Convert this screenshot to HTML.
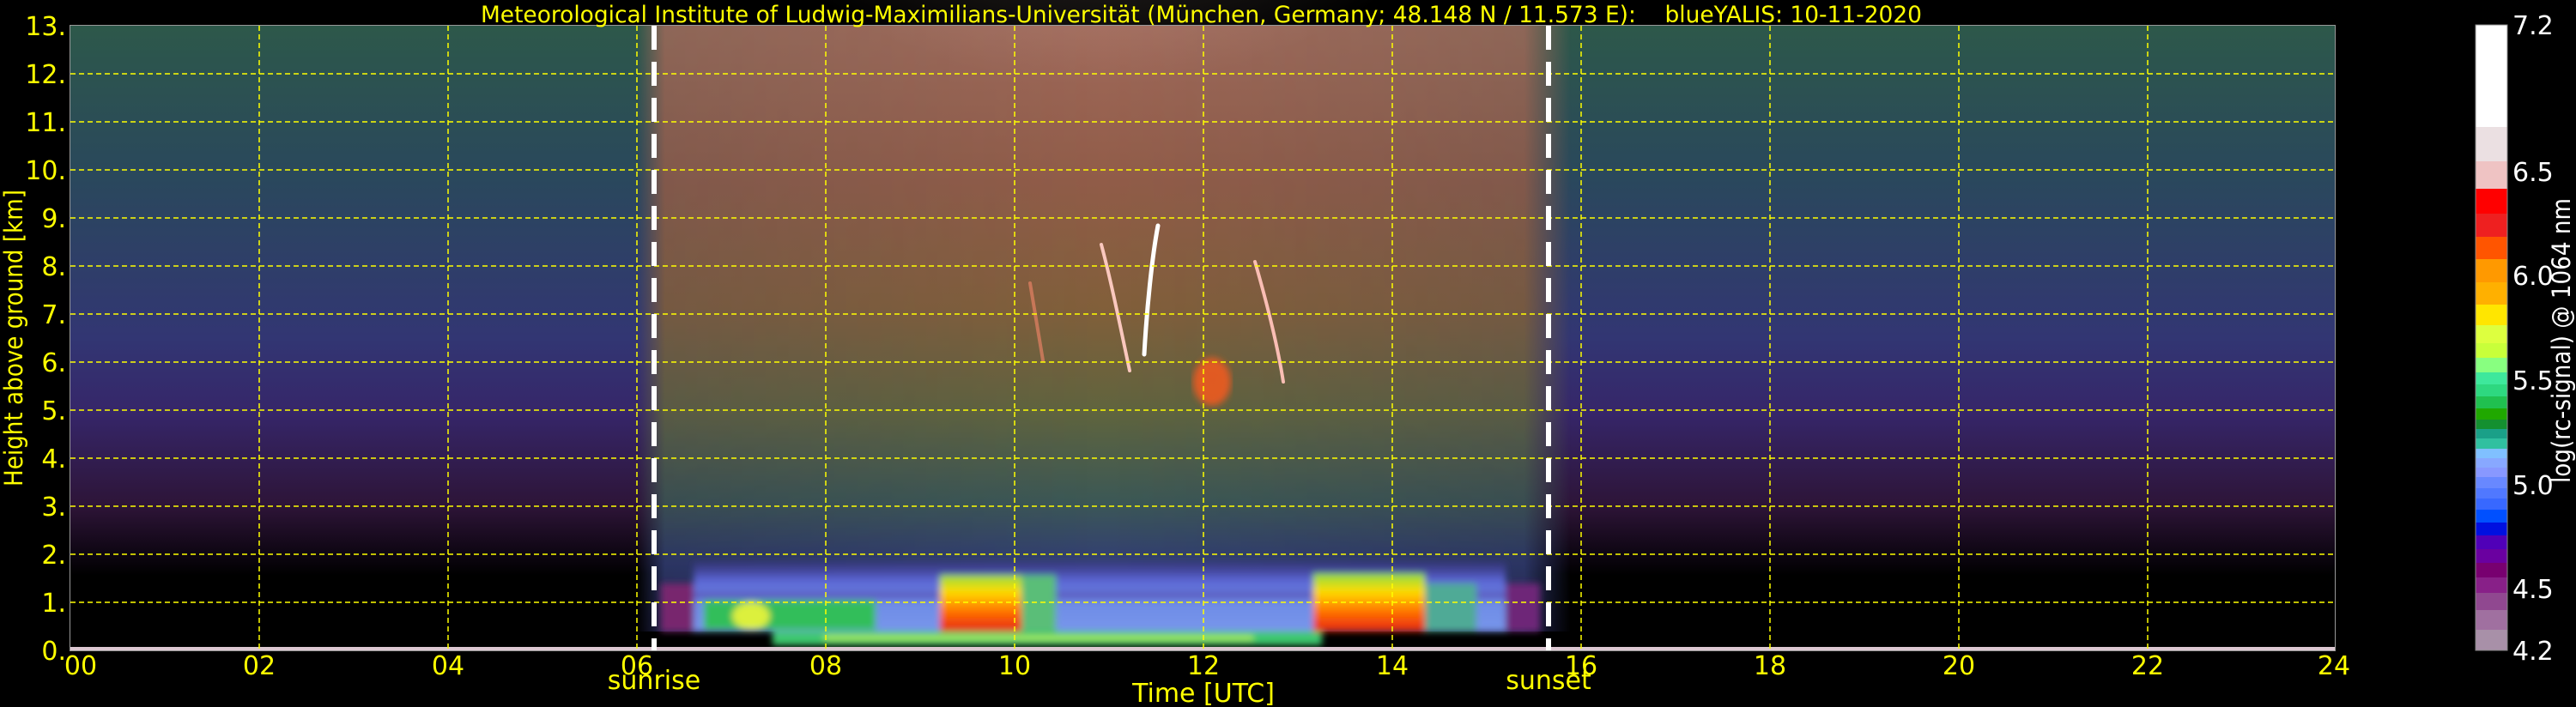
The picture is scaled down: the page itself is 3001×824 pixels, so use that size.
<!DOCTYPE html>
<html><head><meta charset="utf-8"><style>
html,body{margin:0;padding:0;background:#000;width:3001px;height:824px;overflow:hidden}
svg{display:block}
text{font-family:"DejaVu Sans","Liberation Sans",sans-serif}
</style></head><body>
<svg width="3001" height="824" viewBox="0 0 3001 824" xmlns="http://www.w3.org/2000/svg">
<defs>
<linearGradient id="night" x1="0" y1="30" x2="0" y2="758" gradientUnits="userSpaceOnUse">
<stop offset="0" stop-color="rgb(45,88,74)"/>
<stop offset="0.24" stop-color="rgb(42,72,92)"/>
<stop offset="0.5" stop-color="rgb(50,54,115)"/>
<stop offset="0.62" stop-color="rgb(54,38,105)"/>
<stop offset="0.77" stop-color="rgb(45,20,55)"/>
<stop offset="0.85" stop-color="rgb(12,5,16)"/>
<stop offset="0.88" stop-color="rgb(0,0,0)"/>
<stop offset="1" stop-color="rgb(0,0,0)"/>
</linearGradient>
<linearGradient id="day" x1="0" y1="30" x2="0" y2="758" gradientUnits="userSpaceOnUse">
<stop offset="0" stop-color="rgb(160,105,90)"/>
<stop offset="0.25" stop-color="rgb(145,92,72)"/>
<stop offset="0.45" stop-color="rgb(130,95,58)"/>
<stop offset="0.62" stop-color="rgb(95,100,62)"/>
<stop offset="0.76" stop-color="rgb(60,88,85)"/>
<stop offset="0.86" stop-color="rgb(50,62,115)"/>
<stop offset="1" stop-color="rgb(40,40,90)"/>
</linearGradient>
<linearGradient id="dayx" x1="742" y1="0" x2="1830" y2="0" gradientUnits="userSpaceOnUse">
<stop offset="0" stop-color="#fff" stop-opacity="0"/>
<stop offset="0.03" stop-color="#fff" stop-opacity="0.85"/>
<stop offset="0.5" stop-color="#fff" stop-opacity="1"/>
<stop offset="0.95" stop-color="#fff" stop-opacity="0.85"/>
<stop offset="1" stop-color="#fff" stop-opacity="0"/>
</linearGradient>
<mask id="dm"><rect x="742" y="30" width="1090" height="728" fill="url(#dayx)"/></mask>
<radialGradient id="whiteTop" cx="0.5" cy="0" r="0.6">
<stop offset="0" stop-color="rgb(230,200,190)" stop-opacity="0.4"/>
<stop offset="1" stop-color="rgb(230,200,190)" stop-opacity="0"/>
</radialGradient>
<linearGradient id="blband" x1="0" y1="655" x2="0" y2="736" gradientUnits="userSpaceOnUse">
<stop offset="0" stop-color="rgb(70,60,160)" stop-opacity="0.3"/>
<stop offset="0.25" stop-color="rgb(90,100,210)"/>
<stop offset="0.6" stop-color="rgb(110,140,230)"/>
<stop offset="1" stop-color="rgb(120,150,235)"/>
</linearGradient>
<linearGradient id="orb" x1="0" y1="665" x2="0" y2="735" gradientUnits="userSpaceOnUse">
<stop offset="0" stop-color="rgb(120,220,80)"/>
<stop offset="0.35" stop-color="rgb(255,220,0)"/>
<stop offset="0.7" stop-color="rgb(255,110,0)"/>
<stop offset="1" stop-color="rgb(230,40,20)"/>
</linearGradient>
<filter id="bl" x="-5%" y="-20%" width="110%" height="140%"><feGaussianBlur stdDeviation="4"/></filter>
</defs>
<rect width="3001" height="824" fill="#000"/>
<rect x="82" y="30" width="2638" height="728" fill="url(#night)"/>
<rect x="742" y="30" width="1090" height="728" fill="url(#day)" mask="url(#dm)"/>
<ellipse cx="1280" cy="30" rx="420" ry="350" fill="url(#whiteTop)"/>
<rect x="745" y="736" width="1090" height="18" fill="#000"/>
<g filter="url(#bl)">
<rect x="770" y="680" width="40" height="56" fill="rgb(120,40,110)"/>
<rect x="1754" y="680" width="40" height="56" fill="rgb(110,40,120)"/>
<rect x="808" y="655" width="946" height="81" fill="url(#blband)"/>
<rect x="808" y="690" width="946" height="8" fill="rgb(80,60,160)" opacity="0.5"/>
<rect x="820" y="700" width="200" height="34" fill="rgb(50,190,90)"/>
<ellipse cx="875" cy="718" rx="22" ry="16" fill="rgb(220,240,60)"/>
<rect x="1095" y="670" width="95" height="66" fill="url(#orb)"/>
<rect x="1190" y="670" width="40" height="66" fill="rgb(90,190,120)"/>
<rect x="1530" y="668" width="130" height="68" fill="url(#orb)"/>
<rect x="1660" y="680" width="60" height="56" fill="rgb(80,170,150)"/>
<rect x="900" y="736" width="640" height="16" fill="rgb(60,200,110)"/>
<rect x="960" y="741" width="500" height="5" fill="rgb(180,240,90)"/>
</g>
<rect x="82" y="754" width="2638" height="4" fill="rgb(220,200,210)"/>
<g fill="none" stroke-linecap="round">
<path d="M1349 263 C1342 300 1336 360 1333 413" stroke="#fff" stroke-width="5"/>
<path d="M1283 285 C1295 330 1305 380 1316 432" stroke="rgb(250,200,190)" stroke-width="4"/>
<path d="M1462 305 C1475 350 1488 400 1495 445" stroke="rgb(250,190,180)" stroke-width="4"/>
<path d="M1200 330 C1205 360 1210 390 1215 420" stroke="rgb(230,130,100)" stroke-width="4" opacity="0.7"/>
</g>
<ellipse cx="1412" cy="445" rx="22" ry="28" fill="rgb(255,90,30)" opacity="0.8" filter="url(#bl)"/>
<g stroke="#ffff00" stroke-width="1.5" stroke-dasharray="6,4">
<line x1="302" y1="30" x2="302" y2="758"/><line x1="522" y1="30" x2="522" y2="758"/>
<line x1="742" y1="30" x2="742" y2="758"/><line x1="962" y1="30" x2="962" y2="758"/>
<line x1="1182" y1="30" x2="1182" y2="758"/><line x1="1402" y1="30" x2="1402" y2="758"/>
<line x1="1622" y1="30" x2="1622" y2="758"/><line x1="1842" y1="30" x2="1842" y2="758"/>
<line x1="2062" y1="30" x2="2062" y2="758"/><line x1="2282" y1="30" x2="2282" y2="758"/>
<line x1="2502" y1="30" x2="2502" y2="758"/>
<line x1="82" y1="702" x2="2720" y2="702"/><line x1="82" y1="646" x2="2720" y2="646"/>
<line x1="82" y1="590" x2="2720" y2="590"/><line x1="82" y1="534" x2="2720" y2="534"/>
<line x1="82" y1="478" x2="2720" y2="478"/><line x1="82" y1="422" x2="2720" y2="422"/>
<line x1="82" y1="366" x2="2720" y2="366"/><line x1="82" y1="310" x2="2720" y2="310"/>
<line x1="82" y1="254" x2="2720" y2="254"/><line x1="82" y1="198" x2="2720" y2="198"/>
<line x1="82" y1="142" x2="2720" y2="142"/><line x1="82" y1="86" x2="2720" y2="86"/>
</g>
<rect x="81.5" y="29.5" width="2639" height="729" fill="none" stroke="#999" stroke-width="1"/>
<g stroke="#fff" stroke-width="6" stroke-dasharray="28,14">
<line x1="762" y1="30" x2="762" y2="758"/>
<line x1="1804" y1="30" x2="1804" y2="758"/>
</g>
<text x="560" y="26" font-size="27" fill="#ffff00" textLength="1679" lengthAdjust="spacingAndGlyphs" xml:space="preserve">Meteorological Institute of Ludwig-Maximilians-Universität (München, Germany; 48.148 N / 11.573 E):    blueYALIS: 10-11-2020</text>
<g font-size="30" fill="#ffff00" text-anchor="end">
<text x="77" y="769">0.</text><text x="77" y="713">1.</text><text x="77" y="657">2.</text>
<text x="77" y="601">3.</text><text x="77" y="545">4.</text><text x="77" y="489">5.</text>
<text x="77" y="433">6.</text><text x="77" y="377">7.</text><text x="77" y="321">8.</text>
<text x="77" y="265">9.</text><text x="77" y="209">10.</text><text x="77" y="153">11.</text>
<text x="77" y="97">12.</text><text x="77" y="41">13.</text>
</g>
<text transform="translate(26,394) rotate(-90)" font-size="29" fill="#ffff00" text-anchor="middle" textLength="346" lengthAdjust="spacingAndGlyphs">Height above ground [km]</text>
<g font-size="30" fill="#ffff00" text-anchor="middle">
<text x="94" y="786">00</text><text x="302" y="786">02</text><text x="522" y="786">04</text>
<text x="742" y="786">06</text><text x="962" y="786">08</text><text x="1182" y="786">10</text>
<text x="1402" y="786">12</text><text x="1622" y="786">14</text><text x="1842" y="786">16</text>
<text x="2062" y="786">18</text><text x="2282" y="786">20</text><text x="2502" y="786">22</text>
<text x="2719" y="786">24</text>
<text x="762" y="803">sunrise</text><text x="1804" y="803">sunset</text>
<text x="1402" y="818">Time [UTC]</text>
</g>
<g>
<rect x="2884" y="29" width="37" height="119" fill="#ffffff"/>
<rect x="2884" y="148" width="37" height="40" fill="#ebe0e2"/>
<rect x="2884" y="188" width="37" height="32" fill="#efc3c3"/>
<rect x="2884" y="220" width="37" height="29" fill="#ff0000"/>
<rect x="2884" y="249" width="37" height="27" fill="#ee2020"/>
<rect x="2884" y="276" width="37" height="26" fill="#ff5500"/>
<rect x="2884" y="302" width="37" height="27" fill="#ff9900"/>
<rect x="2884" y="329" width="37" height="26" fill="#ffb000"/>
<rect x="2884" y="355" width="37" height="24" fill="#ffe600"/>
<rect x="2884" y="379" width="37" height="21" fill="#ddff3f"/>
<rect x="2884" y="400" width="37" height="17" fill="#c8ff3a"/>
<rect x="2884" y="417" width="37" height="17" fill="#88ff80"/>
<rect x="2884" y="434" width="37" height="14" fill="#3ee89c"/>
<rect x="2884" y="448" width="37" height="14" fill="#2ed880"/>
<rect x="2884" y="462" width="37" height="14" fill="#20c050"/>
<rect x="2884" y="476" width="37" height="13" fill="#20a800"/>
<rect x="2884" y="489" width="37" height="11" fill="#149030"/>
<rect x="2884" y="500" width="37" height="11" fill="#1aa088"/>
<rect x="2884" y="511" width="37" height="12" fill="#30c0a0"/>
<rect x="2884" y="523" width="37" height="11" fill="#80c0ff"/>
<rect x="2884" y="534" width="37" height="11" fill="#88a8ff"/>
<rect x="2884" y="545" width="37" height="11" fill="#8898ff"/>
<rect x="2884" y="556" width="37" height="13" fill="#6888ff"/>
<rect x="2884" y="569" width="37" height="12" fill="#5078ff"/>
<rect x="2884" y="581" width="37" height="13" fill="#3868ff"/>
<rect x="2884" y="594" width="37" height="15" fill="#0050ff"/>
<rect x="2884" y="609" width="37" height="15" fill="#0010e0"/>
<rect x="2884" y="624" width="37" height="16" fill="#5000b8"/>
<rect x="2884" y="640" width="37" height="16" fill="#6a00a0"/>
<rect x="2884" y="656" width="37" height="17" fill="#780070"/>
<rect x="2884" y="673" width="37" height="18" fill="#882088"/>
<rect x="2884" y="691" width="37" height="20" fill="#904890"/>
<rect x="2884" y="711" width="37" height="23" fill="#a070a0"/>
<rect x="2884" y="734" width="37" height="24" fill="#a890a8"/>
<rect x="2884" y="29" width="37" height="729" fill="none" stroke="#888" stroke-width="1"/>
</g>
<g font-size="30" fill="#ffffff">
<text x="2927" y="40">7.2</text><text x="2927" y="211">6.5</text><text x="2927" y="332">6.0</text>
<text x="2927" y="454">5.5</text><text x="2927" y="576">5.0</text><text x="2927" y="697">4.5</text>
<text x="2927" y="769">4.2</text>
</g>
<text transform="translate(2994,397) rotate(-90)" font-size="29" fill="#ffffff" text-anchor="middle" textLength="332" lengthAdjust="spacingAndGlyphs">log(rc-signal) @ 1064 nm</text>
</svg>
</body></html>
